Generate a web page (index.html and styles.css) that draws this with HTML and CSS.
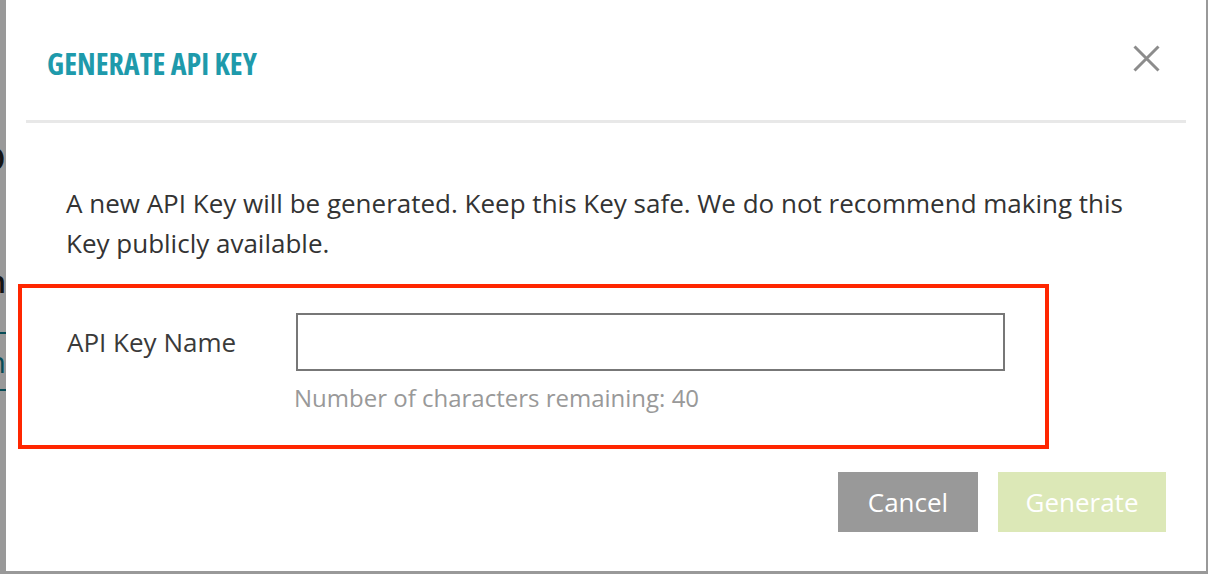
FILE: index.html
```html
<!DOCTYPE html>
<html lang="en">
<head>
<meta charset="utf-8">
<title>Generate API Key</title>
<link rel="stylesheet" href="styles.css">
</head>
<body>
<div class="page">
  <div class="page-side">
    <div class="bg-line bg-heading">Portfolio</div>
    <div class="bg-line bg-sub">Section</div>
    <div class="bg-tab"><span>Search</span></div>
  </div>
</div>
<div class="backdrop"></div>
<div class="modal" role="dialog" aria-labelledby="modal-title">
  <div class="modal-header">
    <h2 class="modal-title" id="modal-title">GENERATE API KEY</h2>
    <button class="close" type="button" aria-label="Close">
      <svg viewBox="0 0 27 27" width="27" height="27" aria-hidden="true">
        <path d="M1.5 1.5 L25.5 25.5 M25.5 1.5 L1.5 25.5" stroke="currentColor" stroke-width="3" fill="none"/>
      </svg>
    </button>
  </div>
  <div class="modal-body">
    <p class="intro">A new API Key will be generated. Keep this Key safe. We do not recommend making this Key publicly available.</p>
    <div class="highlight">
      <div class="form-row">
        <label class="field-label" for="key-name">API Key Name</label>
        <input class="field-input" id="key-name" type="text" maxlength="40">
        <div class="hint">Number of characters remaining: 40</div>
      </div>
    </div>
  </div>
  <div class="modal-footer">
    <button class="btn btn-cancel" type="button">Cancel</button>
    <button class="btn btn-generate" type="button" disabled>Generate</button>
  </div>
</div>
</body>
</html>
```
FILE: styles.css
```css
* { box-sizing: border-box; }

html, body {
  margin: 0;
  padding: 0;
  height: 100%;
  overflow: hidden;
}

body {
  font-family: "Open Sans", "Liberation Sans", sans-serif;
  background: #ffffff;
  color: #333333;
}

/* background page (mostly hidden behind the dialog) */
.page {
  display: flex;
  height: 100%;
}

.page-side {
  width: 6px;
  overflow: hidden;
  display: flex;
  flex-direction: column;
}

.bg-line {
  display: flex;
  justify-content: flex-end;
  white-space: nowrap;
  color: #222;
}

.bg-heading {
  margin-top: 128px;
  font-size: 44px;
  line-height: 52px;
}

.bg-sub {
  margin-top: 82px;
  font-size: 30px;
  line-height: 40px;
  font-weight: 600;
}

.bg-tab {
  margin-top: 30px;
  height: 59px;
  border-top: 2px solid #0e7f8f;
  border-bottom: 2px solid #0e7f8f;
  display: flex;
  justify-content: flex-end;
  align-items: center;
  white-space: nowrap;
  color: #0e7f8f;
  font-size: 30px;
}

.backdrop {
  position: fixed;
  inset: 0;
  background: rgba(0, 0, 0, 0.4);
}

/* dialog */
.modal {
  position: fixed;
  left: 6px;
  top: 0;
  width: 1200px;
  height: 571px;
  background: #ffffff;
  display: flex;
  flex-direction: column;
}

.modal-header {
  margin: 0 20px;
  height: 123px;
  border-bottom: 3px solid #e8e8e8;
  display: flex;
  align-items: center;
  justify-content: space-between;
  padding: 0 26px 3px 21px;
}

.modal-title {
  margin: 10px 0 0;
  font-family: "Open Sans", "Liberation Sans", sans-serif;
  font-stretch: 75%;
  font-weight: 700;
  font-size: 30px;
  line-height: 1;
  color: #1e9aab;
  letter-spacing: 0;
}

.close {
  width: 27px;
  height: 27px;
  padding: 0;
  margin: 0;
  border: 0;
  background: none;
  color: #8c8c8c;
  display: flex;
}

.modal-body {
  padding: 60px 60px 0;
}

.intro {
  margin: 0;
  font-size: 26px;
  line-height: 40px;
  color: #333333;
}

.highlight {
  margin: 21px 0 0 -48px;
  width: 1031px;
  border: 4px solid #ff2600;
  padding: 25px 0 29px 45px;
}

.form-row {
  display: grid;
  grid-template-columns: 229px 709px;
  align-items: center;
}

.field-label {
  font-size: 26px;
  line-height: 40px;
  color: #3a3a3a;
}

.field-input {
  height: 58px;
  width: 709px;
  border: 2px solid #777777;
  border-radius: 0;
  background: #fff;
  font: inherit;
  margin: 0;
}

.hint {
  grid-column: 2;
  margin: 9px 0 0 -2px;
  font-size: 24px;
  line-height: 36px;
  color: #999999;
}

.modal-footer {
  display: flex;
  justify-content: flex-end;
  gap: 20px;
  padding: 23px 40px 0;
}

.btn {
  height: 60px;
  border: 0;
  border-radius: 0;
  font-family: "Open Sans", "Liberation Sans", sans-serif;
  font-size: 26px;
  color: #ffffff;
  padding: 0;
}

.btn-cancel {
  width: 140px;
  background: #999999;
}

.btn-generate {
  width: 168px;
  background: #dce8b7;
}
```
